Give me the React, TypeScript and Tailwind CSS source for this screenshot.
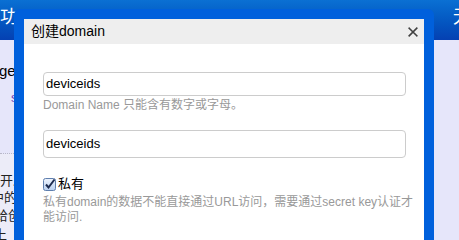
import React from "react";

function CloseIcon() {
  return (
    <svg width="10" height="10" viewBox="0 0 10 10">
      <path d="M1.2 1.2 L8.8 8.8 M8.8 1.2 L1.2 8.8" stroke="#404040" strokeWidth="1.6" strokeLinecap="square" />
    </svg>
  );
}

function CheckIcon() {
  return (
    <svg width="13" height="13" viewBox="0 0 13 13">
      <defs>
        <linearGradient id="cb" x1="0" y1="0" x2="0" y2="1">
          <stop offset="0" stopColor="#eef4fd" />
          <stop offset="1" stopColor="#b9d0f0" />
        </linearGradient>
      </defs>
      <rect x="0.5" y="0.5" width="12" height="12" rx="2" fill="url(#cb)" stroke="#5f7fae" />
      <path d="M3 6.5 L5.5 9.5 L11.5 1.5" stroke="#1c2b4f" strokeWidth="2" fill="none" />
    </svg>
  );
}

export default function App() {
  return (
    <div className="relative w-[459px] h-[240px] overflow-hidden bg-[#e6e6fa] font-['Liberation_Sans','Noto_Sans_CJK_SC',sans-serif]">
      <header className="h-[40px] bg-gradient-to-b from-[#0b70d3] to-[#0540b2] flex justify-between text-white text-[18px] leading-[18px]">
        <span className="ml-[-18px] mt-[8px]">成功</span>
        <span className="mt-[8px] mr-[-30px]">无法</span>
      </header>
      <div className="flex">
        <div className="w-[200px]">
          <div className="h-[113px] pt-[22px] text-[15px] leading-[18px] text-black">
            <div className="ml-[-1px]">ge</div>
            <div className="ml-[11px] mt-[9px] text-[13px] text-[#6b3fb5]">s</div>
          </div>
          <div className="border-b border-dotted border-[#b8b8c8]" />
          <div className="bg-[#ececf8] pt-[18px] text-[13px] leading-[17px] text-[#222] h-[100px]">
            <div className="ml-[0px]">开发</div>
            <div className="ml-[-9px]">中的</div>
            <div className="ml-[-5px] mt-[1px]">给创</div>
            <div className="ml-[-6px] mt-[2px]">上</div>
          </div>
        </div>
      </div>

      <div className="absolute left-[14px] top-[9px] w-[420px] h-[260px] border-[10px] border-[#0060dc] rounded-[6px] bg-white">
        <div className="h-[25px] bg-[#eeeeee] flex items-center justify-between pl-[7px] pr-[6px] text-[14px] text-black">
          <span>创建domain</span>
          <CloseIcon />
        </div>
        <div className="pt-[28px] px-[19px]">
          <div className="w-[363px] h-[24px] border border-[#cccccc] rounded-[4px] px-[2px] flex items-center text-[13px] text-black">
            deviceids
          </div>
          <div className="mt-[2px] text-[12px] leading-[14px] text-[#999999]">
            Domain Name 只能含有数字或字母。
          </div>
          <div className="mt-[18px] w-[363px] h-[28px] border border-[#cccccc] rounded-[4px] px-[2px] flex items-center text-[13px] text-black">
            deviceids
          </div>
          <div className="mt-[18px] flex items-center gap-[2px] text-[13px] leading-[16px] text-black">
            <CheckIcon />
            <span>私有</span>
          </div>
          <div className="mt-[3px] w-[372px] text-[12px] leading-[15px] text-[#999999]">
            私有domain的数据不能直接通过URL访问，需要通过secret key认证才能访问.
          </div>
        </div>
      </div>
    </div>
  );
}
